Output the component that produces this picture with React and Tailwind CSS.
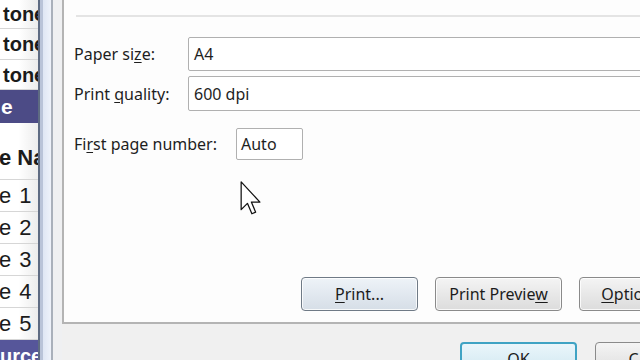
import React from "react";

const cellFont = { fontFamily: '"Liberation Sans", Arial, sans-serif' };
const uiFont = { fontFamily: '"Noto Sans", "Open Sans", sans-serif' };

function Cell({ children, bold, h = "h-[31px]", align = "items-center", extra = "", size = "text-[20px]" }) {
  return (
    <div
      className={`${h} flex ${align} overflow-hidden whitespace-nowrap border-b border-[#d6d6d6] bg-gradient-to-r from-white via-white to-[#ececec] ${size} text-[#1b1b1b] ${bold ? "font-bold" : ""} ${extra}`}
    >
      {children}
    </div>
  );
}

function Btn({ w, children, blue }) {
  return (
    <div
      className={`${w} h-[34px] shrink-0 flex items-center justify-center rounded-[4px] border ${blue ? "border-[#6f7a86] bg-gradient-to-b from-[#eef3f8] to-[#d6dee7]" : "border-[#8a8a8a] bg-gradient-to-b from-[#f4f4f4] to-[#dcdcdc]"} text-[16px] text-[#1c1c1c] shadow-[inset_0_0_0_1px_rgba(255,255,255,0.8)]`}
    >
      {children}
    </div>
  );
}

export default function App() {
  return (
    <div className="w-[640px] h-[360px] overflow-hidden flex bg-[#f0f0f0]" style={uiFont}>
      {/* left spreadsheet strip */}
      <div className="w-[38px] shrink-0 flex flex-col bg-white" style={cellFont}>
        <Cell bold h="h-[29px]" extra="pl-[3px]">tone</Cell>
        <Cell bold h="h-[31px]" extra="pl-[3px]">tone</Cell>
        <Cell bold h="h-[30px]" extra="pl-[3px]">tone</Cell>
        <div className="h-[33px] flex items-center bg-[#4c4b86] text-white font-bold text-[21px] pl-[1px] overflow-hidden whitespace-nowrap">
          e
        </div>
        <Cell bold h="h-[57px]" align="items-end pb-[5px]" size="text-[22px]" extra="-ml-[1px]">e Na</Cell>
        <Cell h="h-[32px]" size="text-[22px]" extra="-ml-[1px] tracking-[1px]">e 1</Cell>
        <Cell h="h-[32px]" size="text-[22px]" extra="-ml-[1px] tracking-[1px]">e 2</Cell>
        <Cell h="h-[32px]" size="text-[22px]" extra="-ml-[1px] tracking-[1px]">e 3</Cell>
        <Cell h="h-[32px]" size="text-[22px]" extra="-ml-[1px] tracking-[1px]">e 4</Cell>
        <Cell h="h-[32px]" size="text-[22px]" extra="-ml-[1px] tracking-[1px]">e 5</Cell>
        <div className="flex-1 flex items-end bg-[#56569a] text-white font-bold text-[20px] overflow-hidden whitespace-nowrap leading-none -mb-[6px]">
          urce
        </div>
      </div>

      {/* window frame divider */}
      <div className="w-[24px] shrink-0 flex">
        <div className="w-[2px] bg-[#5e6b82]" />
        <div className="w-[3px] bg-[#b9c3d8]" />
        <div className="w-[8px] bg-gradient-to-r from-[#dfe6f4] to-[#eef2fa]" />
        <div className="w-[2px] bg-[#a9b0bb]" />
        <div className="w-[9px] bg-[#eff0f2]" />
      </div>

      {/* dialog */}
      <div className="flex-1 flex flex-col min-w-0">
        <div className="h-[324px] shrink-0 bg-[#fdfdfd] border-l-2 border-b-2 border-[#b4b4b4] flex flex-col overflow-hidden text-[16px] text-[#1e1e1e]">
          <div className="mt-[15px] ml-[12px] h-[2px] bg-[#e4e4e4]" />
          <div className="mt-[20px] flex items-center">
            <div className="w-[124px] pl-[10px] shrink-0">
              Paper si<span className="underline underline-offset-2">z</span>e:
            </div>
            <div className="h-[34px] w-[500px] shrink-0 border border-[#b0b0b0] rounded-[2px] bg-white flex items-center pl-[5px]">A4</div>
          </div>
          <div className="mt-[5px] flex items-center">
            <div className="w-[124px] pl-[10px] shrink-0">
              Print <span className="underline underline-offset-2">q</span>uality:
            </div>
            <div className="h-[35px] w-[500px] shrink-0 border border-[#b0b0b0] rounded-[2px] bg-white flex items-center pl-[5px]">600 dpi</div>
          </div>
          <div className="mt-[17px] flex items-center">
            <div className="w-[172px] pl-[10px] shrink-0 whitespace-nowrap">
              Fi<span className="underline underline-offset-2">r</span>st page number:
            </div>
            <div className="h-[32px] w-[67px] shrink-0 border border-[#b0b0b0] rounded-[2px] bg-white flex items-center pl-[4px]">Auto</div>
          </div>
          <div className="mt-[117px] ml-[237px] flex gap-[17px]">
            <Btn w="w-[117px]" blue>
              <span><span className="underline underline-offset-2">P</span>rint...</span>
            </Btn>
            <Btn w="w-[127px]">
              <span>Print Previe<span className="underline underline-offset-2">w</span></span>
            </Btn>
            <Btn w="w-[117px]">
              <span><span className="underline underline-offset-2">O</span>ptions...</span>
            </Btn>
          </div>
        </div>
        <div className="mt-[18px] ml-[398px] flex gap-[18px]">
          <div className="w-[117px] h-[34px] shrink-0 rounded-[4px] border-2 border-[#3fa3c4] bg-gradient-to-b from-[#eaf6fb] to-[#cfe6f0] flex items-center justify-center text-[16px] text-[#1c1c1c]">
            OK
          </div>
          <div className="w-[117px] h-[34px] shrink-0 rounded-[4px] border border-[#8a8a8a] bg-gradient-to-b from-[#f4f4f4] to-[#dcdcdc] flex items-center justify-center text-[16px] text-[#1c1c1c]">
            Cancel
          </div>
        </div>
      </div>

      {/* mouse cursor */}
      <svg className="absolute left-[240px] top-[181px]" width="22" height="34" viewBox="0 0 12 19">
        <path d="M0.5 0.5 L0.5 16 L4 12.5 L6.5 18.3 L8.6 17.4 L6.2 11.8 L11 11.8 Z" fill="#ffffff" stroke="#111111" strokeWidth="0.7" strokeLinejoin="round" />
      </svg>
    </div>
  );
}
